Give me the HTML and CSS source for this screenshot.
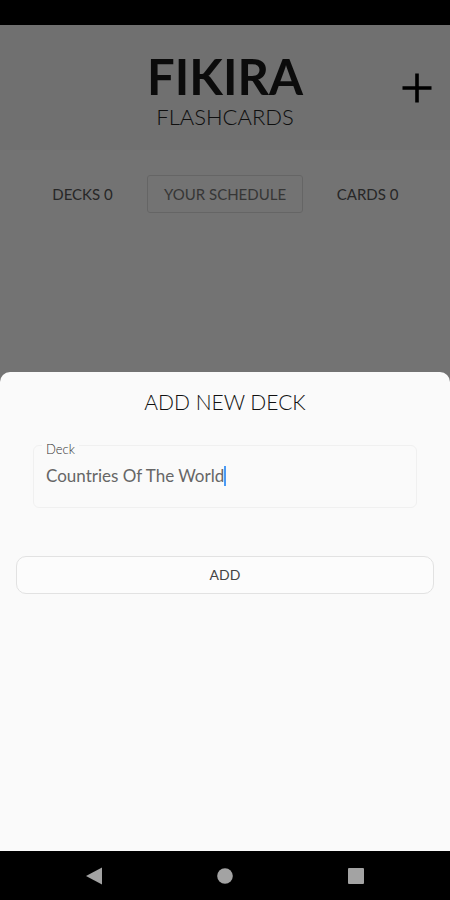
FILE: index.html
```html
<!DOCTYPE html>
<html lang="en">
<head>
    <meta charset="UTF-8">
    <meta name="viewport" content="width=device-width, initial-scale=1.0">
    <title>Fikira Flashcards</title>
    <link rel="stylesheet" href="styles.css">
</head>
<body>
    <div class="status-bar"></div>

    <div class="screen">
        <header class="header">
            <div class="brand">
                <h1>FIKIRA</h1>
                <p>FLASHCARDS</p>
            </div>
            <button class="add-icon" type="button" aria-label="Add deck">
                <svg width="30" height="30" viewBox="0 0 30 30">
                    <path d="M15 0.5v29M0.5 15h29" stroke="#000" stroke-width="3.6" fill="none"/>
                </svg>
            </button>
        </header>

        <div class="stats">
            <span>DECKS 0</span>
            <button class="schedule" type="button">YOUR SCHEDULE</button>
            <span>CARDS 0</span>
        </div>

        <div class="backdrop"></div>

        <form class="sheet" role="dialog" aria-labelledby="sheet-title">
            <h2 id="sheet-title">ADD NEW DECK</h2>
            <fieldset class="field">
                <legend><label for="deck">Deck</label></legend>
                <div class="field-row">
                    <input id="deck" type="text" value="Countries Of The World">
                    <span class="caret"></span>
                </div>
            </fieldset>
            <button class="submit" type="submit">ADD</button>
        </form>
    </div>

    <nav class="nav-bar">
        <button type="button" aria-label="Back">
            <svg width="18" height="18" viewBox="0 0 18 18"><path d="M1 9 17 0.5v17z" fill="#a3a3a3"/></svg>
        </button>
        <button type="button" aria-label="Home">
            <svg width="18" height="18" viewBox="0 0 18 18"><circle cx="9" cy="9" r="7.8" fill="#a3a3a3"/></svg>
        </button>
        <button type="button" aria-label="Recent apps">
            <svg width="18" height="18" viewBox="0 0 18 18"><rect x="1" y="1" width="16" height="16" rx="1" fill="#a3a3a3"/></svg>
        </button>
    </nav>
</body>
</html>
```
FILE: styles.css
```css
* {
    box-sizing: border-box;
}

body {
    margin: 0;
    min-height: 100vh;
    display: flex;
    flex-direction: column;
    background-color: #000;
    font-family: Lato, "Open Sans", sans-serif;
    color: #444;
}

button {
    padding: 0;
    border: none;
    background: none;
    font: inherit;
    color: inherit;
}

svg {
    display: block;
}

h1, h2, p {
    margin: 0;
}

.status-bar {
    height: 25px;
}

.screen {
    position: relative;
    flex: 1;
    background-color: #fafafa;
}

/* Header */
.header {
    display: grid;
    grid-template-columns: 1fr auto 1fr;
    align-items: center;
    height: 125px;
    padding: 0 18px;
    background-color: #f3f3f3;
}

.brand {
    grid-column: 2;
    padding-top: 4px;
    text-align: center;
}

.brand h1 {
    font-size: 49px;
    line-height: 54px;
    color: #1a1a1a;
}

.brand p {
    font-size: 22px;
    line-height: 28px;
    font-weight: 300;
    color: #222;
}

.add-icon {
    justify-self: end;
}

.stats {
    display: grid;
    grid-template-columns: 1fr auto 1fr;
    align-items: center;
    justify-items: center;
    padding: 25px 18px;
    font-size: 15px;
    color: #555;
}

.schedule {
    height: 38px;
    padding: 0 16px;
    border: 1px solid #ddd;
    border-radius: 3px;
    color: #777;
}

.backdrop {
    position: absolute;
    inset: 0;
    background-color: rgba(0, 0, 0, 0.54);
}

/* Bottom sheet */
.sheet {
    position: absolute;
    left: 0;
    right: 0;
    bottom: 0;
    height: 58%;
    display: flex;
    flex-direction: column;
    padding: 15px 16px;
    border-radius: 10px 10px 0 0;
    background-color: #fafafa;
}

.sheet h2 {
    font-size: 21px;
    line-height: 30px;
    font-weight: 300;
    text-align: center;
    color: #111;
}

.field {
    margin: 19px 17px 48px;
    padding: 0 8px 20px;
    border: 1px solid #f0f0f0;
    border-radius: 6px;
}

.field legend {
    padding: 6px 4px 0;
    font-size: 13px;
    line-height: 14px;
    font-weight: 300;
    color: #333;
}

.field-row {
    display: flex;
    align-items: center;
    padding: 9px 4px 0;
}

.field input {
    field-sizing: content;
    padding: 0;
    border: none;
    outline: none;
    background: none;
    font: inherit;
    font-size: 17px;
    line-height: 22px;
    color: #666;
}

.caret {
    width: 2px;
    height: 20px;
    background-color: #4a9af5;
}

.submit {
    height: 38px;
    border: 1px solid #e2e2e2;
    border-radius: 10px;
    background-color: #fcfcfc;
    font-size: 14px;
}

/* Android navigation */
.nav-bar {
    display: flex;
    justify-content: space-around;
    align-items: center;
    height: 49px;
    padding: 0 29px;
}

.nav-bar button {
    width: 18px;
}
```
